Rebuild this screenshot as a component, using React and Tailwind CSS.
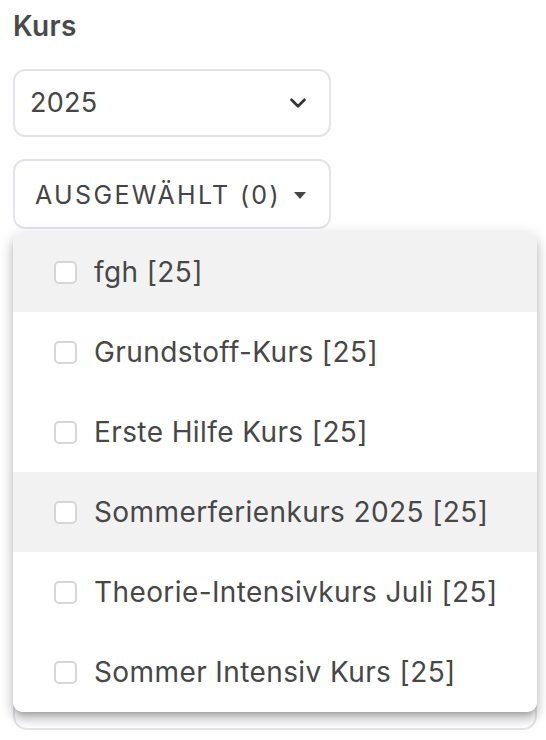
import React from "react";

const items = [
  { label: "fgh [25]", hl: true },
  { label: "Grundstoff-Kurs [25]" },
  { label: "Erste Hilfe Kurs [25]" },
  { label: "Sommerferienkurs 2025 [25]", hl: true },
  { label: "Theorie-Intensivkurs Juli [25]" },
  { label: "Sommer Intensiv Kurs [25]" },
];

export default function App() {
  return (
    <div
      className="relative w-[546px] h-[740px] overflow-hidden bg-white text-[#474747]"
      style={{ fontFamily: "Inter, 'Open Sans', sans-serif" }}
    >
      <div className="pl-[13px] pt-[6px] flex flex-col">
        <div className="text-[28px] font-semibold leading-[40px] tracking-[0.3px] text-[#4a4a4a]">Kurs</div>
        <div className="mt-[23px] w-[318px] h-[68px] rounded-[12px] border-2 border-[#e2e5ea] flex items-center justify-between pl-[15px] pr-[18px]">
          <span className="text-[27px] tracking-[0.3px] text-[#454545]">2025</span>
          <svg width="26" height="26" viewBox="0 0 24 24" fill="none" stroke="#333" strokeWidth="2.4" strokeLinecap="round" strokeLinejoin="round">
            <path d="M6 9l6 6 6-6" />
          </svg>
        </div>
        <div className="mt-[22px] w-[318px] h-[70px] rounded-[12px] border-2 border-[#e2e5ea] flex items-center pl-[20px] pt-[3px]">
          <span className="text-[25px] tracking-[2.35px] text-[#444]">AUSGEWÄHLT (0)</span>
          <svg className="ml-[12px]" width="14" height="10" viewBox="0 0 14 10">
            <path d="M1 1h12L7 8z" fill="#444" />
          </svg>
        </div>
        <div className="mt-[22px] w-[524px] h-[479px] rounded-[14px] border-2 border-[#e2e5ea]" />
      </div>

      <div className="absolute left-[13px] top-[232px] w-[524px] bg-white rounded-[10px] overflow-hidden shadow-[0_5px_5px_-3px_rgba(0,0,0,0.2),0_8px_10px_1px_rgba(0,0,0,0.14),0_3px_14px_2px_rgba(0,0,0,0.12)]">
        {items.map((it, i) => (
          <div
            key={i}
            className={`h-[80px] flex items-center pl-[41px] ${it.hl ? "bg-[#f2f2f2]" : "bg-white"}`}
          >
            <span className="w-[23px] h-[23px] rounded-[5px] border-2 border-[#d6d6d6] bg-white shrink-0" />
            <span className="ml-[17px] text-[28px] tracking-[0.4px] text-[#474747]">{it.label}</span>
          </div>
        ))}
      </div>
    </div>
  );
}
